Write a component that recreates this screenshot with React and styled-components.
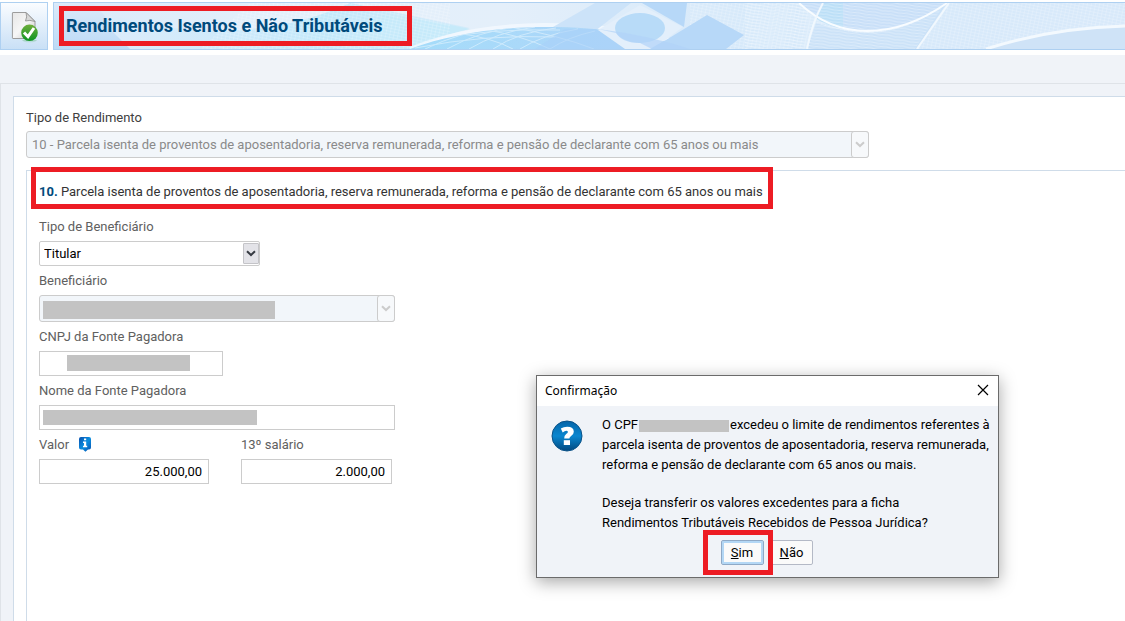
import React, { useState } from "react";
import styled, { createGlobalStyle } from "styled-components";

const colors = {
  page: "#f0f3f8",
  line: "#dfe3e8",
  panelLine: "#cfdce9",
  tileLine: "#aed0f1",
  field: "#cccccc",
  title: "#004a7c",
  label: "#606060",
  mask: "#c3c3c3",
  mark: "#ed1c24",
};

const GlobalStyle = createGlobalStyle`
  * {
    box-sizing: border-box;
  }
  body {
    margin: 0;
    font-family: Roboto, "Liberation Sans", sans-serif;
    font-size: 13px;
    line-height: 16px;
    color: #333333;
    background: ${colors.page};
  }
  button, input, select {
    font: inherit;
  }
`;

const Page = styled.div`
  display: flex;
  flex-direction: column;
  min-height: 100vh;
  overflow: hidden;
`;

const Header = styled.header`
  display: flex;
  gap: 5px;
  padding: 2px 0 5px;
  background: #ffffff;
`;

const HeaderButton = styled.button`
  display: flex;
  align-items: center;
  justify-content: center;
  width: 48px;
  height: 48px;
  padding: 0;
  border: 1px solid ${colors.tileLine};
  background: linear-gradient(#fafcff, #c9e0f6);
`;

const Banner = styled.div`
  position: relative;
  flex: 1;
  display: flex;
  align-items: center;
  height: 48px;
  padding-left: 5px;
  border: 1px solid ${colors.tileLine};
  border-right: 0;
  overflow: hidden;
`;

const BannerArt = styled.svg`
  position: absolute;
  top: 0;
  left: 0;
  width: 100%;
  height: 100%;
`;

const BannerTitle = styled.h1`
  position: relative;
  width: 353px;
  margin: 0;
  padding: 0 2px;
  border: 5px solid ${colors.mark};
  font-size: 18px;
  line-height: 30px;
  font-weight: 700;
  color: ${colors.title};
  white-space: nowrap;
`;

const Content = styled.main`
  flex: 1;
  display: flex;
  margin-top: 28px;
  padding: 12px 0 0 12px;
  border-top: 1px solid ${colors.line};
  border-left: 1px solid ${colors.line};
`;

const Panel = styled.section`
  flex: 1;
  display: flex;
  flex-direction: column;
  gap: 12px;
  padding: 13px 0 0 12px;
  border-top: 1px solid ${colors.panelLine};
  border-left: 1px solid ${colors.panelLine};
  background: #ffffff;
`;

const Group = styled.div`
  flex: 1;
  padding: 13px 0 0 12px;
  border-top: 1px solid ${colors.panelLine};
  border-left: 1px solid ${colors.panelLine};
`;

const GroupTitle = styled.h2`
  position: relative;
  width: fit-content;
  margin: 0 0 19px;
  font-size: 13px;
  font-weight: 400;
  white-space: nowrap;

  b {
    color: ${colors.title};
  }
  &::after {
    content: "";
    position: absolute;
    inset: -17px -10px -9px -8px;
    border: 5px solid ${colors.mark};
  }
`;

const Form = styled.form`
  display: flex;
  flex-direction: column;
  gap: 7px;
`;

const FieldRow = styled.div`
  display: flex;
  gap: 32px;
`;

const Field = styled.div`
  display: flex;
  flex-direction: column;
  gap: ${(props) => (props.$tight ? 5 : 6)}px;
`;

const LabelRow = styled.div`
  display: flex;
  gap: 9px;
  height: 16px;
`;

const Label = styled.label`
  color: ${(props) => (props.$dark ? "#404040" : colors.label)};
`;

const InfoButton = styled.button`
  display: flex;
  padding: 0;
  border: 0;
  background: none;
`;

const Control = styled.div`
  position: relative;
  display: flex;
  width: ${(props) => props.$width}px;
`;

const TextBox = styled.input`
  width: 100%;
  height: 25px;
  padding: 0 6px;
  border: 1px solid ${colors.field};
  background: #ffffff;
  color: #000000;
  text-align: ${(props) => props.$align || "left"};
`;

const SelectBox = styled.select`
  appearance: none;
  width: 100%;
  height: 25px;
  padding: 0 22px 0 4px;
  border: 1px solid ${colors.field};
  border-radius: 2px;
  background: #ffffff;
  color: #000000;

  &:disabled {
    height: 27px;
    padding-left: 5px;
    border-radius: 3px;
    background: #f2f6fa;
    color: #8a8a8a;
    opacity: 1;
  }
`;

const Arrow = styled.span`
  position: absolute;
  top: ${(props) => (props.$disabled ? 0 : 2)}px;
  right: ${(props) => (props.$disabled ? 0 : 1)}px;
  bottom: ${(props) => (props.$disabled ? 0 : 2)}px;
  display: flex;
  align-items: center;
  justify-content: center;
  width: ${(props) => (props.$disabled ? 18 : 16)}px;
  border: 1px solid ${(props) => (props.$disabled ? colors.field : "#c4c4c8")};
  border-radius: ${(props) => (props.$disabled ? 3 : 1)}px;
  background: ${(props) => (props.$disabled ? "#f7f9fb" : "#e3e3e8")};
  color: ${(props) => (props.$disabled ? "#cccccc" : "#363a42")};
  pointer-events: none;
`;

const Mask = styled.span`
  position: absolute;
  top: ${(props) => props.$top}px;
  left: ${(props) => props.$left}px;
  width: ${(props) => props.$width}px;
  height: ${(props) => props.$height}px;
  background: ${colors.mask};
`;

const InlineMask = styled.span`
  display: inline-block;
  width: 90px;
  height: 12px;
  margin: 0 1px;
  vertical-align: -3px;
  background: ${colors.mask};
`;

const Dialog = styled.div`
  position: absolute;
  top: 375px;
  left: 536px;
  width: 463px;
  border: 1px solid #6b6b6b;
  background: ${colors.page};
  box-shadow: 0 4px 16px rgba(0, 0, 0, 0.35);
  color: #000000;
`;

const DialogBar = styled.div`
  display: flex;
  align-items: center;
  justify-content: space-between;
  height: 30px;
  padding: 0 8px;
  background: #ffffff;
  font-family: "Noto Sans", "Open Sans", sans-serif;
  font-size: 12px;
`;

const CloseButton = styled.button`
  display: flex;
  padding: 0 0 2px;
  border: 0;
  background: none;
`;

const DialogBody = styled.div`
  display: flex;
  gap: 19px;
  padding: 9px 8px 0 14px;
`;

const DialogIcon = styled.svg`
  flex: none;
  width: 32px;
  height: 32px;
  margin-top: 5px;
`;

const Message = styled.div`
  p {
    margin: 0 0 18px;
    line-height: 20px;
    white-space: nowrap;
  }
  p:last-child {
    margin-bottom: 7px;
  }
`;

const DialogActions = styled.div`
  display: flex;
  justify-content: center;
  gap: 7px;
  padding: 0 2px 12px 0;
`;

const ActionButton = styled.button`
  width: 42px;
  height: 25px;
  padding: 0;
  border: 1px solid #b4b9c6;
  border-radius: 2px;
  background: #fafafa;
  color: #000000;
`;

const DefaultAction = styled.div`
  position: relative;

  ${ActionButton} {
    width: 43px;
    border-color: #8fa9c6;
    box-shadow: inset 0 0 0 2px #b3d7f5;
  }
  &::after {
    content: "";
    position: absolute;
    inset: -10px -9px -10px -18px;
    border: 5px solid ${colors.mark};
    pointer-events: none;
  }
`;

function DocumentIcon() {
  return (
    <svg width="30" height="34" viewBox="9 9 30 34" aria-hidden="true">
      <defs>
        <linearGradient id="paper" x1="0" y1="0" x2="1" y2="1">
          <stop offset="0" stopColor="#e6e6e6" />
          <stop offset="0.5" stopColor="#f6f6f6" />
          <stop offset="1" stopColor="#c4c4c4" />
        </linearGradient>
        <linearGradient id="check" x1="0" y1="0" x2="0" y2="1">
          <stop offset="0" stopColor="#6fae3c" />
          <stop offset="1" stopColor="#0c9422" />
        </linearGradient>
        <linearGradient id="reflection" x1="0" y1="0" x2="0" y2="1">
          <stop offset="0" stopColor="#7fc39a" stopOpacity="0.6" />
          <stop offset="1" stopColor="#7fc39a" stopOpacity="0" />
        </linearGradient>
      </defs>
      <path d="M22 40h15q-2 2.5-7.5 3-5.5-.5-7.5-3z" fill="url(#reflection)" />
      <path
        d="M13 12.5h13l9 9v17H13a.6.6 0 0 1-.6-.6v-25a.5.5 0 0 1 .6-.4z"
        fill="url(#paper)"
        stroke="#9c9c9c"
      />
      <path d="M26 12.5q1.5 4.5-.5 8.5 4-1.5 9.500.5z" fill="#d8d8d8" stroke="#8a8a8a" strokeWidth="0.8" />
      <circle cx="29.5" cy="32.8" r="8.3" fill="url(#check)" />
      <path d="M24 32.5l4 4.2 6-8.7" fill="none" stroke="#ffffff" strokeWidth="3" />
    </svg>
  );
}

function InfoIcon() {
  return (
    <svg width="14" height="16" viewBox="0 0 14 16" aria-hidden="true">
      <defs>
        <linearGradient id="info" x1="0" y1="0" x2="1" y2="1">
          <stop offset="0" stopColor="#0a4fae" />
          <stop offset="0.5" stopColor="#0a8fe0" />
          <stop offset="1" stopColor="#0a4fae" />
        </linearGradient>
      </defs>
      <path
        d="M3 0h8a2 2 0 0 1 2 2v8.500a2 2 0 0 1-2 2h-1l-2.600 2.300-2.400-2.300H3a2 2 0 0 1-2-2V2a2 2 0 0 1 2-2z"
        fill="url(#info)"
      />
      <path d="M6 1.5h2.200v1.800H6zM5 4.500h3.200v4.300h1v1.400H5V8.800h1V5.900H5z" fill="#ffffff" />
    </svg>
  );
}

function Chevron() {
  return (
    <svg width="10" height="7" viewBox="0 0 10 7" aria-hidden="true">
      <path d="M1 1.2l4 3.8 4-3.8" fill="none" stroke="currentColor" strokeWidth="2" />
    </svg>
  );
}

function QuestionIcon() {
  return (
    <DialogIcon viewBox="0 0 32 32" aria-hidden="true">
      <defs>
        <linearGradient id="question" x1="0" y1="0" x2="0" y2="1">
          <stop offset="0" stopColor="#0565a8" />
          <stop offset="0.5" stopColor="#0a86cf" />
          <stop offset="1" stopColor="#02487f" />
        </linearGradient>
      </defs>
      <circle cx="16" cy="16" r="15" fill="url(#question)" stroke="#0a5288" />
      <path
        d="M9.8 8.6q2.8-1.9 6.4-1.9 6.6 0 6.6 5 0 2.7-2.7 4.3-1.7 1-1.7 2.6h-5.2q-.2-3.1 2-4.6 1.7-1.1 1.7-2 0-1.3-1.7-1.3-1.5 0-3.5 1.7z"
        fill="#ffffff"
      />
      <path d="M12.8 20.2h6.2v4.8h-6.2z" fill="#ffffff" />
    </DialogIcon>
  );
}

function BannerDrawing() {
  return (
    <BannerArt viewBox="54 3 1071 46" preserveAspectRatio="xMinYMid slice" aria-hidden="true">
      <defs>
        <linearGradient id="sky" x1="0" y1="0" x2="1" y2="0">
          <stop offset="0" stopColor="#dbeafa" />
          <stop offset="0.2" stopColor="#e2effb" />
          <stop offset="0.42" stopColor="#e4effa" />
          <stop offset="0.65" stopColor="#d6e9fa" />
          <stop offset="1" stopColor="#d8e9fa" />
        </linearGradient>
        <linearGradient id="edge" x1="0" y1="0" x2="0" y2="1">
          <stop offset="0" stopColor="#dceafa" />
          <stop offset="1" stopColor="#bcdaf6" />
        </linearGradient>
        <linearGradient id="globe" x1="0" y1="0" x2="1" y2="0">
          <stop offset="0" stopColor="#a5dcfa" />
          <stop offset="1" stopColor="#b2d4f8" />
        </linearGradient>
        <linearGradient id="swoosh" x1="0" y1="0" x2="1" y2="0">
          <stop offset="0" stopColor="#dcecfb" />
          <stop offset="0.6" stopColor="#c2e8fa" />
          <stop offset="1" stopColor="#d4ebfa" />
        </linearGradient>
        <pattern id="mesh" width="4" height="3" patternUnits="userSpaceOnUse" patternTransform="rotate(12)">
          <path d="M0 0h4M0 0v3" fill="none" stroke="#ffffff" strokeWidth="0.7" opacity="0.5" />
        </pattern>
        <pattern id="waves" width="16" height="3" patternUnits="userSpaceOnUse" patternTransform="rotate(8)">
          <path d="M0 1.5q4-1 8 0t8 0" fill="none" stroke="#ffffff" strokeWidth="0.8" opacity="0.45" />
        </pattern>
        <clipPath id="globeClip">
          <path d="M410 49C450 34 500 27 545 27c60 0 105 8 147 22z" />
        </clipPath>
      </defs>
      <path d="M54 3h1071v46H54z" fill="url(#sky)" />
      <path d="M54 3h40q28 34 40 46H54z" fill="url(#edge)" />
      <path d="M110 14q60 20 130 16 60-4 110-27l120 25q-35 8-62 21H130l-20-20z" fill="url(#swoosh)" />
      <path d="M344 49q8-20 40-34 40 4 86 14-35 8-56 20z" fill="#c6eafa" />
      <path d="M250 3h200v46H200z" fill="url(#mesh)" />
      <path d="M410 49C450 32 500 25 545 25c60 0 110 8 152 24" fill="none" stroke="#f6fbff" strokeWidth="4" opacity="0.7" />
      <path d="M553 27l42-24h36l-36 28z" fill="#cce3f9" />
      <path d="M410 49C450 34 500 27 545 27c60 0 105 8 147 22z" fill="url(#globe)" />
      <g clipPath="url(#globeClip)" fill="none" stroke="#e6f5fe" strokeWidth="1" opacity="0.6">
        <path d="M425 49q35-17 75-22M447 49q32-18 70-22M469 49q28-17 66-22M493 49q25-17 63-21M520 49q22-14 58-20M550 49q18-12 45-18" />
        <path d="M455 33q36 4 58 16M480 29q42 6 70 20M510 27q48 8 84 22M430 40q60-12 130-10M415 48q70-14 140-11" />
      </g>
      <path d="M535 49l30-20h30l40 20z" fill="#a9d0f8" opacity="0.6" />
      <path d="M598 30l42-25 43 22-30 22h-28z" fill="#e3effb" />
      <path d="M642 3h45l-3 24z" fill="#b7d8f8" />
      <path d="M690 3h435v46H690z" fill="url(#mesh)" />
      <path d="M650 49q10-6 16-9l41-25 37 20-18 14z" fill="#b7d8f8" />
      <ellipse cx="640" cy="28" rx="25" ry="15" fill="#b8dbf8" />
      <path d="M598 29q50 6 92 20h-38l-12-6q-18 0-24-10z" fill="#b0d3f8" opacity="0.7" />
      <path d="M799 3h148q-40 28-80 28-38 0-68-28z" fill="#c8dff8" />
      <path d="M823 3h20v26q-18-4-28-11z" fill="#bbdff7" />
      <path d="M807 49l9-26q28 10 51 10 40 0 80-30l-31 46z" fill="#cbe2f8" />
      <path d="M745 3h200l-30 46H745z" fill="url(#waves)" />
      <path d="M799 3q30 28 68 28 40 0 80-28" fill="none" stroke="#f8fcff" strokeWidth="2" />
      <path d="M823 3q-11 20-16 46M949 3l-32 46" fill="none" stroke="#f1f8fe" strokeWidth="2" />
      <path d="M988 49q65-20 137-22v22z" fill="#cfe3f7" />
      <path d="M986 49q65-21 139-23" fill="none" stroke="#f3f9fe" strokeWidth="3" />
    </BannerArt>
  );
}

function ComboField({ id, label, width, options, disabled, dark, mask }) {
  const [value, setValue] = useState(options[0]);

  return (
    <Field $tight={dark}>
      <Label htmlFor={id} $dark={dark}>
        {label}
      </Label>
      <Control $width={width}>
        <SelectBox
          id={id}
          value={value}
          disabled={disabled}
          onChange={(e) => setValue(e.target.value)}
        >
          {options.map((option) => (
            <option key={option} value={option}>
              {option}
            </option>
          ))}
        </SelectBox>
        <Arrow $disabled={disabled}>
          <Chevron />
        </Arrow>
        {mask}
      </Control>
    </Field>
  );
}

function TextField({ id, label, width, initial = "", align, info, mask }) {
  const [value, setValue] = useState(initial);

  return (
    <Field>
      <LabelRow>
        <Label htmlFor={id}>{label}</Label>
        {info && (
          <InfoButton type="button" aria-label="Informações">
            <InfoIcon />
          </InfoButton>
        )}
      </LabelRow>
      <Control $width={width}>
        <TextBox
          id={id}
          type="text"
          value={value}
          $align={align}
          onChange={(e) => setValue(e.target.value)}
        />
        {mask}
      </Control>
    </Field>
  );
}

function ConfirmDialog({ onClose }) {
  return (
    <Dialog role="dialog" aria-labelledby="dialog-title">
      <DialogBar>
        <span id="dialog-title">Confirmação</span>
        <CloseButton type="button" aria-label="Fechar" onClick={onClose}>
          <svg width="14" height="14" viewBox="0 0 14 14" aria-hidden="true">
            <path d="M2 2l10 10M12 2L2 12" stroke="#000000" strokeWidth="1.2" />
          </svg>
        </CloseButton>
      </DialogBar>
      <DialogBody>
        <QuestionIcon />
        <Message>
          <p>
            O CPF
            <InlineMask />
            excedeu o limite de rendimentos referentes à
            <br />
            parcela isenta de proventos de aposentadoria, reserva remunerada,
            <br />
            reforma e pensão de declarante com 65 anos ou mais.
          </p>
          <p>
            Deseja transferir os valores excedentes para a ficha
            <br />
            Rendimentos Tributáveis Recebidos de Pessoa Jurídica?
          </p>
        </Message>
      </DialogBody>
      <DialogActions>
        <DefaultAction>
          <ActionButton type="button" onClick={onClose}>
            <u>S</u>im
          </ActionButton>
        </DefaultAction>
        <ActionButton type="button" onClick={onClose}>
          <u>N</u>ão
        </ActionButton>
      </DialogActions>
    </Dialog>
  );
}

function App() {
  const [dialogOpen, setDialogOpen] = useState(true);

  return (
    <>
      <GlobalStyle />
      <Page>
        <Header>
          <HeaderButton type="button" aria-label="Confirmar">
            <DocumentIcon />
          </HeaderButton>
          <Banner>
            <BannerDrawing />
            <BannerTitle>Rendimentos Isentos e Não Tributáveis</BannerTitle>
          </Banner>
        </Header>
        <Content>
          <Panel>
            <ComboField
              id="income-type"
              label="Tipo de Rendimento"
              width={843}
              disabled
              dark
              options={[
                "10 - Parcela isenta de proventos de aposentadoria, reserva remunerada, reforma e pensão de declarante com 65 anos ou mais",
              ]}
            />
            <Group>
              <GroupTitle>
                <b>10.</b> Parcela isenta de proventos de aposentadoria, reserva
                remunerada, reforma e pensão de declarante com 65 anos ou mais
              </GroupTitle>
              <Form>
                <ComboField
                  id="beneficiary-type"
                  label="Tipo de Beneficiário"
                  width={221}
                  options={["Titular", "Dependente"]}
                />
                <ComboField
                  id="beneficiary"
                  label="Beneficiário"
                  width={356}
                  disabled
                  options={[""]}
                  mask={<Mask $top={6} $left={4} $width={232} $height={18} />}
                />
                <TextField
                  id="cnpj"
                  label="CNPJ da Fonte Pagadora"
                  width={184}
                  mask={<Mask $top={4} $left={28} $width={123} $height={16} />}
                />
                <TextField
                  id="payer"
                  label="Nome da Fonte Pagadora"
                  width={356}
                  mask={<Mask $top={5} $left={4} $width={214} $height={15} />}
                />
                <FieldRow>
                  <TextField
                    id="amount"
                    label="Valor"
                    width={170}
                    initial="25.000,00"
                    align="right"
                    info
                  />
                  <TextField
                    id="bonus"
                    label="13º salário"
                    width={151}
                    initial="2.000,00"
                    align="right"
                  />
                </FieldRow>
              </Form>
            </Group>
          </Panel>
        </Content>
      </Page>
      {dialogOpen && <ConfirmDialog onClose={() => setDialogOpen(false)} />}
    </>
  );
}

export default App;
